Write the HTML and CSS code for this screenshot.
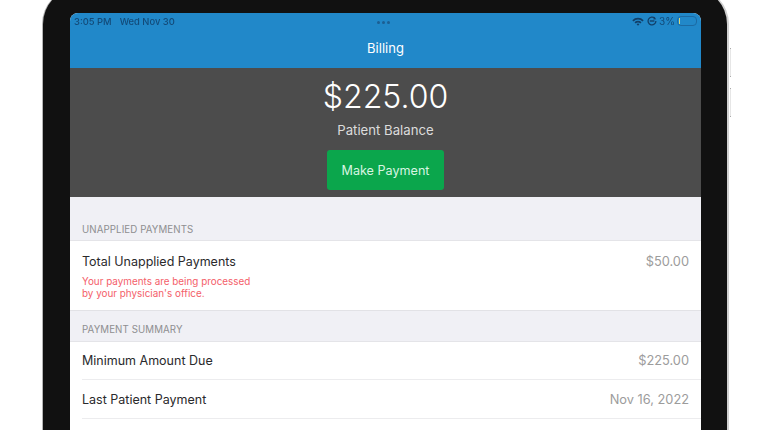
FILE: index.html
```html
<!DOCTYPE html>
<html lang="en">
<head>
  <meta name="viewport" content="width=device-width, initial-scale=1.0">
  <title>Billing</title>
  <link rel="stylesheet" href="styles.css">
</head>
<body>
  <div class="tablet">
    <span class="side-button side-button-up"></span>
    <span class="side-button side-button-down"></span>
    <div class="screen">
      <header class="nav">
        <div class="status">
          <span class="status-time">3:05 PM</span>
          <span class="status-date">Wed Nov 30</span>
          <span class="status-dots"><i></i><i></i><i></i></span>
          <span class="status-right">
            <svg class="icon-wifi" width="12" height="9" viewBox="0 0 12 9">
              <path d="M0.3 3.2A8 8 0 0 1 11.7 3.2L10.5 4.4A6.3 6.3 0 0 0 1.5 4.4Z"/>
              <path d="M2.5 5.3A5 5 0 0 1 9.5 5.3L8.3 6.5A3.3 3.3 0 0 0 3.7 6.5Z"/>
              <path d="M4.6 7.3A2 2 0 0 1 7.4 7.3L6 8.8Z"/>
            </svg>
            <svg class="icon-lock" width="10" height="10" viewBox="0 0 10 10">
              <path class="icon-ring" d="M8.9 5A3.9 3.9 0 1 1 7.8 2.3"/>
              <path d="M2.8 4.3H7.4V5.7H2.8Z"/>
              <path d="M7.2 0.8L9.2 3.2L6.4 3.6Z"/>
            </svg>
            <span class="status-pct">3%</span>
            <span class="battery"><i></i></span>
          </span>
        </div>
        <h1 class="nav-title">Billing</h1>
      </header>

      <section class="balance">
        <div class="balance-amount">$225.00</div>
        <div class="balance-label">Patient Balance</div>
        <button class="pay-btn">Make Payment</button>
      </section>

      <section class="list">
        <h2 class="list-head list-head-first">UNAPPLIED PAYMENTS</h2>
        <div class="row row-tall">
          <div>
            <div class="row-label">Total Unapplied Payments</div>
            <p class="row-note">Your payments are being processed<br>by your physician's office.</p>
          </div>
          <div class="row-value">$50.00</div>
        </div>
        <h2 class="list-head">PAYMENT SUMMARY</h2>
        <div class="row row-first">
          <div class="row-label">Minimum Amount Due</div>
          <div class="row-value">$225.00</div>
        </div>
        <div class="row">
          <div class="row-label">Last Patient Payment</div>
          <div class="row-value">Nov 16, 2022</div>
        </div>
      </section>
    </div>
  </div>
</body>
</html>
```

FILE: styles.css
```css
html, body {
  margin: 0;
  padding: 0;
  height: 430px;
  overflow: hidden;
  background: #fff;
}
body {
  font-family: "Inter", "Liberation Sans", sans-serif;
}
.tablet {
  position: relative;
  width: 684px;
  height: 442px;
  margin: -12px 0 0 43px;
  padding: 25px 26px 0 27px;
  box-sizing: border-box;
  background: #111;
  border-radius: 36px 36px 0 0;
  box-shadow: -1px 0 0 #b5b5b5, 2px 0 0 #d0d0d0;
}
.side-button {
  position: absolute;
  right: -4px;
  width: 1px;
  height: 29px;
  background: #e6e6e6;
  border-top: 1px solid #aaa;
  border-bottom: 1px solid #aaa;
  box-sizing: border-box;
}
.side-button-up {
  top: 60px;
}
.side-button-down {
  top: 100px;
}
.screen {
  background: #fff;
  border-radius: 8px 8px 0 0;
  overflow: hidden;
  height: 417px;
  filter: blur(0.35px);
}
.nav {
  height: 55px;
  background: #2188c9;
  color: #fff;
}
.status {
  display: flex;
  align-items: center;
  height: 16px;
  padding: 0 4px 0 4px;
  font-size: 9.4px;
  font-weight: 500;
  color: #134a78;
  position: relative;
}
.status-date {
  margin-left: 8px;
}
.status-dots {
  position: absolute;
  left: 307px;
  top: 8px;
  display: flex;
  gap: 2px;
}
.status-dots i {
  width: 3px;
  height: 3px;
  border-radius: 50%;
  background: #1c5f93;
}
.status-right {
  margin-left: auto;
  display: flex;
  align-items: center;
  gap: 3px;
}
.status-right svg {
  fill: #123f68;
}
.icon-lock .icon-ring {
  fill: none;
  stroke: #123f68;
  stroke-width: 1.3;
}
.status-pct {
  font-size: 10px;
  font-weight: 400;
  color: #134a78;
  margin-left: -1px;
  margin-right: -1px;
}
.battery {
  width: 16px;
  height: 6px;
  border: 1px solid #1c6aa3;
  border-radius: 4px;
  display: block;
  padding: 1px;
}
.battery i {
  display: block;
  width: 1px;
  height: 6px;
  background: #d9d97a;
}
.nav-title {
  margin: 9px 0 0;
  font-size: 13px;
  font-weight: 400;
  line-height: 20px;
  text-align: center;
}
.balance {
  height: 129px;
  background: #4c4c4c;
  color: #fff;
  display: flex;
  flex-direction: column;
  align-items: center;
}
.balance-amount {
  font-size: 32px;
  font-weight: 300;
  line-height: 40px;
  margin-top: 9px;
}
.balance-label {
  font-size: 13.2px;
  line-height: 18px;
  margin-top: 4px;
  color: #dcdcdc;
}
.pay-btn {
  width: 117px;
  height: 40px;
  margin-top: 11px;
  border: 0;
  border-radius: 3px;
  background: #0ba64c;
  color: #d8f5e2;
  font: 400 12.6px "Inter", "Liberation Sans", sans-serif;
}
.list {
  background: #fff;
}
.list-head {
  margin: 0;
  height: 31px;
  box-sizing: border-box;
  padding: 13px 12px 0;
  background: #f0f0f5;
  font-size: 9.7px;
  font-weight: 400;
  line-height: 12px;
  letter-spacing: 0.1px;
  color: #8e8e90;
  border-bottom: 1px solid #e4e4e8;
}
.list-head-first {
  height: 44px;
  padding-top: 27px;
}
.row {
  height: 39px;
  box-sizing: border-box;
  margin-left: 12px;
  padding: 1px 12px 0 0;
  display: flex;
  justify-content: space-between;
  align-items: center;
  border-bottom: 1px solid #ececee;
}
.row-first {
  height: 38px;
}
.row-tall {
  height: 70px;
  margin-left: 0;
  padding: 12px 12px 0;
  align-items: flex-start;
  border-bottom-color: #e2e2e6;
}
.row-label {
  font-size: 12.5px;
  line-height: 18px;
  color: #2a2a2c;
}
.row-note {
  margin: 4px 0 0;
  font-size: 9.9px;
  line-height: 12px;
  color: #f4606a;
}
.row-value {
  font-size: 12.8px;
  line-height: 18px;
  color: #9c9c9c;
}
```
